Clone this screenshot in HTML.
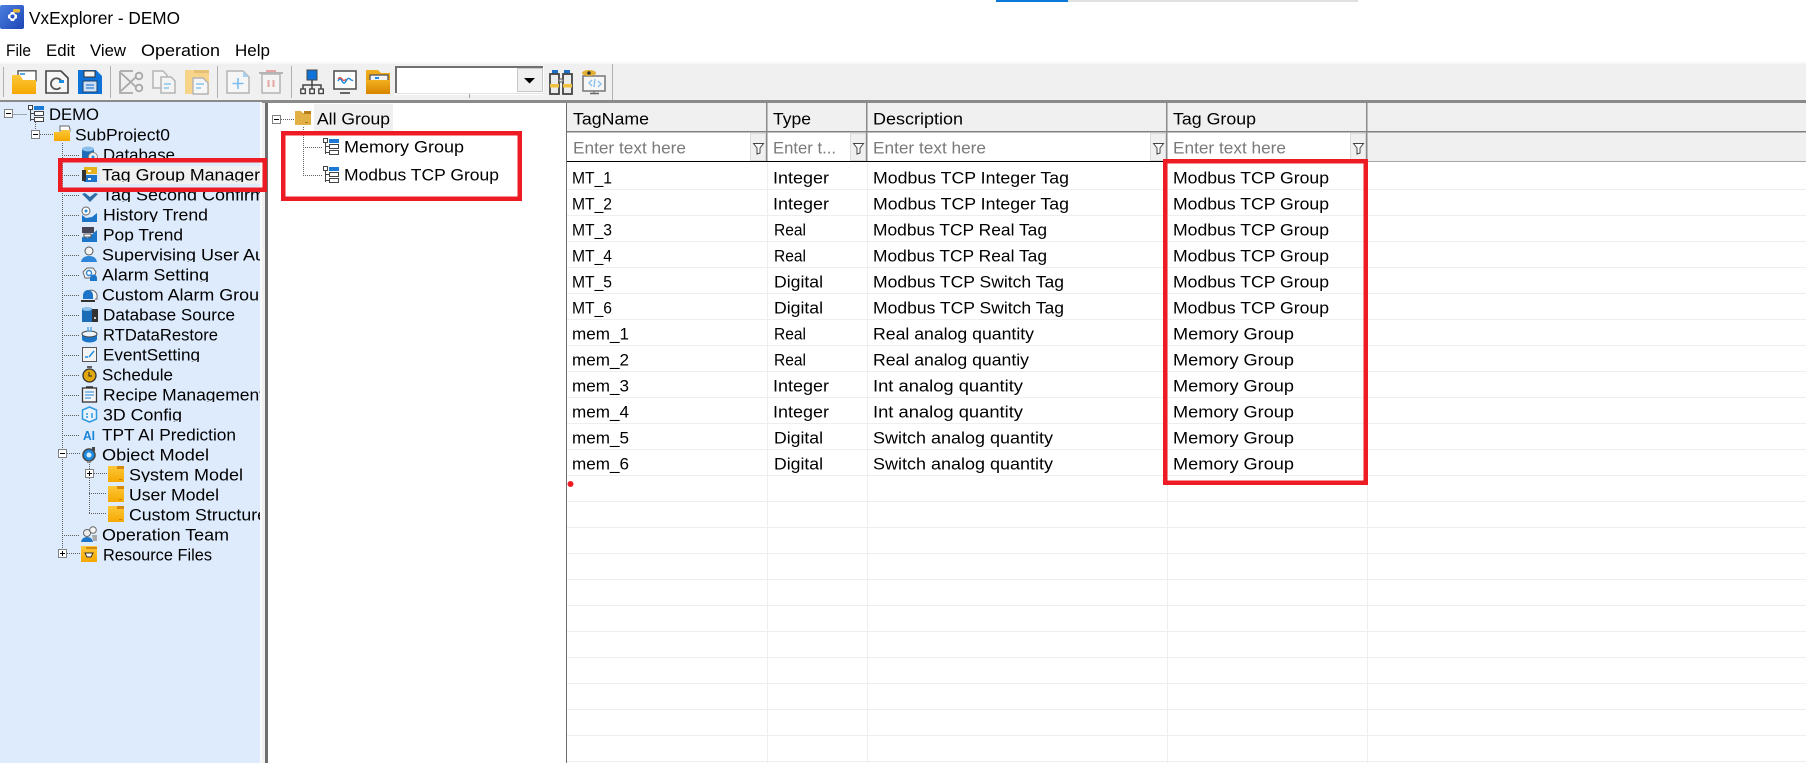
<!DOCTYPE html>
<html><head><meta charset="utf-8"><title>VxExplorer - DEMO</title>
<style>
html,body{margin:0;padding:0;background:#fff;width:1806px;height:763px;overflow:hidden}
svg{display:block}
text{font-family:"Liberation Sans",sans-serif;font-size:17px;fill:#000}
.f{fill:#7a7a7a}
</style></head><body>
<svg xmlns="http://www.w3.org/2000/svg" width="1806" height="763" viewBox="0 0 1806 763">
<defs>
<linearGradient id="yg" x1="0" y1="0" x2="0" y2="1"><stop offset="0" stop-color="#fdc83a"/><stop offset="1" stop-color="#f5a800"/></linearGradient>
<linearGradient id="og" x1="0" y1="0" x2="0" y2="1"><stop offset="0" stop-color="#f2b01e"/><stop offset="1" stop-color="#d88400"/></linearGradient>
<linearGradient id="bl" x1="0" y1="0" x2="1" y2="1"><stop offset="0" stop-color="#4a7fe0"/><stop offset="1" stop-color="#1f45b5"/></linearGradient>
<clipPath id="rows"><rect x="0" y="104" width="260" height="18"/><rect x="0" y="125" width="260" height="17"/><rect x="0" y="145" width="260" height="17"/><rect x="0" y="165" width="260" height="17"/><rect x="0" y="185" width="260" height="17"/><rect x="0" y="205" width="260" height="17"/><rect x="0" y="225" width="260" height="17"/><rect x="0" y="245" width="260" height="17"/><rect x="0" y="265" width="260" height="17"/><rect x="0" y="285" width="260" height="17"/><rect x="0" y="305" width="260" height="17"/><rect x="0" y="325" width="260" height="17"/><rect x="0" y="345" width="260" height="17"/><rect x="0" y="365" width="260" height="17"/><rect x="0" y="385" width="260" height="17"/><rect x="0" y="405" width="260" height="17"/><rect x="0" y="425" width="260" height="17"/><rect x="0" y="445" width="260" height="17"/><rect x="0" y="465" width="260" height="17"/><rect x="0" y="485" width="260" height="17"/><rect x="0" y="505" width="260" height="17"/><rect x="0" y="525" width="260" height="17"/><rect x="0" y="545" width="260" height="17"/></clipPath>
<g id="minus"><rect x="0.5" y="0.5" width="8" height="8" fill="#fff" stroke="#808080"/><path d="M2 4.5h5" stroke="#000"/></g>
<g id="plus"><rect x="0.5" y="0.5" width="8" height="8" fill="#fff" stroke="#808080"/><path d="M2 4.5h5M4.5 2v5" stroke="#000"/></g>
<g id="tree"><rect x="1.5" y="0.5" width="4" height="4" fill="#fff" stroke="#444"/><rect x="7" y="1" width="10" height="4" fill="#1a7ad4"/><path d="M3.5 5v11M3.5 8.5H7M3.5 14.500H7" stroke="#444" fill="none"/><rect x="7.500" y="6.500" width="9" height="4" fill="#fff" stroke="#444"/><rect x="7.500" y="12.500" width="9" height="4" fill="#fff" stroke="#444"/></g>
<g id="fold"><path d="M0 0h11l1 2h4v14H0z" fill="url(#yg)"/><path d="M9 0h7v3H9z" fill="#d68a10"/><path d="M11 13h3v1h-3z" fill="#c98200"/></g>
<filter id="soft" x="-5%" y="-5%" width="110%" height="110%"><feGaussianBlur stdDeviation="0.3"/></filter>
</defs>

<!-- loading bar -->
<rect x="996" y="0" width="72" height="2" fill="#0a78d7"/>
<rect x="1068" y="0" width="290" height="2" fill="#e1e1e1"/>

<!-- title -->
<rect x="0" y="5" width="24" height="24" rx="2" fill="url(#bl)"/>
<path d="M8 15l2-1 1-2h3l1 2 2 1v3l-2 1-1 2h-3l-1-2-2-1z" fill="#fff"/>
<circle cx="12.500" cy="16.500" r="2" fill="#2a55c4"/>
<rect x="13" y="9" width="7" height="3.500" rx="1" fill="#e8b93a"/>
<text x="29" y="24" textLength="151" lengthAdjust="spacingAndGlyphs" style="font-size:17.500px">VxExplorer - DEMO</text>
<text x="6" y="56" textLength="25" lengthAdjust="spacingAndGlyphs">File</text>
<text x="46" y="56" textLength="29" lengthAdjust="spacingAndGlyphs">Edit</text>
<text x="90" y="56" textLength="36" lengthAdjust="spacingAndGlyphs">View</text>
<text x="141" y="56" textLength="79" lengthAdjust="spacingAndGlyphs">Operation</text>
<text x="235" y="56" textLength="35" lengthAdjust="spacingAndGlyphs">Help</text>

<!-- toolbar -->
<rect x="0" y="62" width="1806" height="2" fill="#f7f7f7"/>
<rect x="0" y="64" width="1806" height="37" fill="#f0f0f0"/>
<rect x="0" y="100" width="1806" height="2" fill="#8a8a8a"/>
<path d="M3.500 67v30M110.500 66v32M217.500 66v32M291.500 66v32M612.500 64v36" stroke="#b0b0b0" fill="none"/>

<g filter="url(#soft)">
<!-- open -->
<g transform="translate(12,70)"><path d="M6 0.800h18v10H6z" fill="#fff" stroke="#555" stroke-width="1.400"/><rect x="8" y="3" width="5" height="2" fill="#5aa9e6"/><path d="M0 5h8l3 5h13v14H0z" fill="url(#yg)"/></g>
<!-- refresh doc -->
<g transform="translate(45,70)"><path d="M1 1h15l7 7v15H1z" fill="#f6f6f6" stroke="#444" stroke-width="1.600"/><path d="M16.500 11.500a5.500 5.500 0 1 0-1 6" fill="none" stroke="#555" stroke-width="1.800"/><path d="M14 10h5v3h-5z" fill="#1f8de0"/></g>
<!-- save -->
<g transform="translate(78,70)"><path d="M0 0h18l6 6v18H0z" fill="#0b73d8"/><rect x="6" y="1" width="11" height="6" fill="#f4f4f4" stroke="#333"/><rect x="5" y="11" width="14" height="11" fill="#cfe0f4" stroke="#1a3f6d"/><path d="M8 15h8M8 18h8" stroke="#4a90d8" stroke-width="1.400"/></g>
<!-- cut -->
<g transform="translate(119,70)" fill="none" stroke="#a8a8a8" stroke-width="1.800"><path d="M1 1h13M1 1v22h13"/><circle cx="20" cy="6" r="3.300"/><circle cx="20" cy="18" r="3.300"/><path d="M2 3l15 14M2 21l15-14"/></g>
<!-- copy -->
<g transform="translate(152,70)"><path d="M1 1h10l4 4v13H1z" fill="#f4f4f4" stroke="#b4b4b4" stroke-width="1.500"/><path d="M9 7h10l4 4v12H9z" fill="#f4f4f4" stroke="#b4b4b4" stroke-width="1.500"/><path d="M12 14h7M12 18h5" stroke="#8cc4ee" stroke-width="1.600"/></g>
<!-- paste -->
<g transform="translate(185,70)"><path d="M0 0h24v24H0z" fill="#f6d48a"/><path d="M9 0h15v3H9z" fill="#e6c074"/><path d="M8 8h10l5 5v11H8z" fill="#f6f6f6" stroke="#b4b4b4" stroke-width="1.400"/><path d="M11 14h8M11 18h5" stroke="#8cc4ee" stroke-width="1.600"/></g>
<!-- new -->
<g transform="translate(226,70)"><path d="M1 1h16l6 6v16H1z" fill="#f6f6f6" stroke="#b4b4b4" stroke-width="1.500"/><path d="M17 1l6 6h-6z" fill="#a8d0f0"/><path d="M12 8v11M6.500 13.500h11" stroke="#7cbcec" stroke-width="1.600"/></g>
<!-- delete -->
<g transform="translate(259,70)"><path d="M0 3h24" stroke="#b4b4b4" stroke-width="2"/><path d="M7 0h10v2H7z" fill="#e6a5a5"/><path d="M3 4h18v19H3z" fill="#f4f4f4" stroke="#b4b4b4" stroke-width="1.500"/><path d="M9.500 10v7M14.500 10v7" stroke="#e6a5a5" stroke-width="2"/></g>
<!-- network -->
<g transform="translate(300,70)"><rect x="7" y="0" width="10" height="10" fill="#0b73d8" stroke="#444"/><path d="M12 10v4M3 19v-4h18v4M12 14v5" fill="none" stroke="#444" stroke-width="1.500"/><rect x="0.800" y="19" width="4.500" height="4.500" fill="#fff" stroke="#444" stroke-width="1.400"/><rect x="9.800" y="19" width="4.500" height="4.500" fill="#fff" stroke="#444" stroke-width="1.400"/><rect x="18.800" y="19" width="4.500" height="4.500" fill="#fff" stroke="#444" stroke-width="1.400"/></g>
<!-- monitor -->
<g transform="translate(333,70)"><rect x="1" y="1" width="22" height="18" fill="#fff" stroke="#555" stroke-width="1.600"/><path d="M5 11q2-4 4 0t4 0 4-2 3 1" fill="none" stroke="#1f8de0" stroke-width="1.500"/><path d="M5 9q2-3 4 0t4 0" fill="none" stroke="#e84a3a" stroke-width="1.200"/><path d="M7 23h10" stroke="#666" stroke-width="2"/></g>
<!-- orange folder -->
<g transform="translate(366,70)"><path d="M0 0h12l3 3h9v21H0z" fill="url(#og)"/><rect x="4" y="5" width="18" height="11" fill="#f4f4f4" stroke="#555" stroke-width="1.300"/><rect x="9" y="7" width="4" height="2" fill="#1f8de0"/><path d="M0 10h24l-1 14H0z" fill="url(#og)"/></g>
</g>

<!-- combobox -->
<rect x="395" y="66" width="149" height="29" fill="#fff"/>
<path d="M396 93V67h147" fill="none" stroke="#707070" stroke-width="2"/>
<path d="M396 93.500h148" stroke="#e3e3e3"/>
<rect x="517.500" y="68.500" width="25" height="23" fill="#f0f0f0" stroke="#c8c8c8"/>
<path d="M524 78h11l-5.500 5.500z" fill="#000"/>
<rect x="469" y="94" width="1" height="4" fill="#a0a0a0"/>

<g filter="url(#soft)">
<!-- binoculars -->
<g transform="translate(549,70)"><rect x="3" y="0" width="6" height="4" fill="#1a6fc4"/><rect x="15" y="0" width="6" height="4" fill="#1a6fc4"/><rect x="1" y="4" width="9" height="20" fill="#ececec" stroke="#444" stroke-width="1.800"/><rect x="14" y="4" width="9" height="20" fill="#ececec" stroke="#444" stroke-width="1.800"/><rect x="1" y="14" width="9" height="3.500" fill="#f0c040"/><rect x="14" y="14" width="9" height="3.500" fill="#f0c040"/><rect x="10" y="9" width="4" height="3" fill="#ddd" stroke="#555"/></g>
<!-- eye screen -->
<g transform="translate(582,70)"><rect x="1" y="6" width="22" height="15" fill="#f6f6f6" stroke="#777" stroke-width="1.500"/><ellipse cx="7" cy="3" rx="7" ry="3" fill="#e2b030"/><circle cx="7" cy="3" r="1.800" fill="#333"/><path d="M10 10l-3 3 3 3M13 9l-1 8M16 11l3 3-3 3" fill="none" stroke="#8cc0ee" stroke-width="1.400"/><path d="M8 23.500h9" stroke="#666" stroke-width="1.500"/><path d="M12 21v2" stroke="#666"/></g>
</g>

<!-- panels -->
<rect x="0" y="102" width="260" height="661" fill="#deebfc"/>
<rect x="260" y="102" width="2" height="661" fill="#fafafa"/>
<rect x="262" y="102" width="3" height="661" fill="#f0f0f0"/>
<rect x="265" y="102" width="3" height="661" fill="#6e6e6e"/>
<rect x="268" y="103" width="298" height="660" fill="#fff"/>
<rect x="566" y="102" width="1" height="661" fill="#6e6e6e"/>
<rect x="262" y="102" width="1544" height="1" fill="#8a8a8a"/>

<!-- tree lines -->
<g fill="none" stroke="#606060" stroke-dasharray="1 1">
<path d="M13.500 114.500H27M35.500 122V130M40 134.500H54M62.500 143V549"/>
<path d="M62 155.500H80M62 175.500H80M62 195.500H80M62 215.500H80M62 235.500H80M62 255.500H80M62 275.500H80M62 295.500H80M62 315.500H80M62 335.500H80M62 355.500H80M62 375.500H80M62 395.500H80M62 415.500H80M62 435.500H80M67 453.500H80M62 535.500H80M67 553.500H80"/>
<path d="M89.500 462V513.500M94 473.500H107M89 493.500H107M89 513.500H107"/>
<path d="M281 119.500H295M303.500 127V175.500M303 147.500H322M303 175.500H322"/>
</g>
<use href="#minus" x="4" y="109"/><use href="#minus" x="31" y="130"/>
<use href="#minus" x="58" y="449"/><use href="#plus" x="85" y="469"/><use href="#plus" x="58" y="549"/>
<use href="#tree" x="27" y="105"/>

<!-- SubProject folder -->
<path d="M60 126h9l1 3v2H60z" fill="#fff" stroke="#666"/>
<path d="M54 132h6l2-2h8v11H54z" fill="url(#yg)"/>

<!-- tree icons -->
<rect x="100" y="166" width="160" height="18" fill="#f0f0f0"/>
<g filter="url(#soft)">
<!-- database -->
<g transform="translate(81,146)"><rect x="1" y="2" width="12" height="14" rx="2" fill="#1a6cb8"/><ellipse cx="7" cy="3" rx="6" ry="2.500" fill="#8cc0e8"/><circle cx="12" cy="11" r="4.500" fill="#f0f0f0" stroke="#888"/><circle cx="12" cy="11" r="1.500" fill="#1f8de0"/></g>
<!-- tag group -->
<g transform="translate(81,166)"><path d="M3 1h13v7H3z" fill="#e6b21e"/><path d="M3 9h13v7H3z" fill="#1a74c8"/><path d="M1 4h4v11H1z" fill="#333"/><rect x="7" y="4" width="3" height="2" fill="#fff"/><rect x="7" y="12" width="3" height="2" fill="#fff"/></g>
<!-- second confirm -->
<g transform="translate(81,186)"><path d="M1 8l8 8 8-8-3-1-5 4-5-4z" fill="#2d6da8"/></g>
<!-- history -->
<g transform="translate(81,206)"><circle cx="5" cy="5" r="4" fill="#fff" stroke="#666"/><circle cx="5" cy="5" r="1.500" fill="#1f8de0"/><path d="M1 16V9l4 3 6-1 5-4v9z" fill="#1a74c8"/></g>
<!-- pop -->
<g transform="translate(81,226)"><rect x="1" y="1" width="12" height="6" fill="#445" /><path d="M1 16v-5l6 1 9-8v12z" fill="#1a74c8"/><rect x="3" y="8" width="7" height="3" fill="#fff" stroke="#555"/></g>
<!-- user -->
<g transform="translate(81,246)"><circle cx="8" cy="5" r="4" fill="#f4f4f4" stroke="#555"/><path d="M0 16q1-6 8-6t8 6z" fill="#2d86d8"/></g>
<!-- alarm -->
<g transform="translate(81,266)"><path d="M2 6l4-4h6l3 4-2 6H4z" fill="#f4f4f4" stroke="#666"/><circle cx="8" cy="7" r="2.500" fill="#fff" stroke="#2d86d8" stroke-width="1.400"/><path d="M9 15v-3a3.500 3.500 0 0 1 7 0v3z" fill="#1a74c8"/></g>
<!-- custom alarm -->
<g transform="translate(81,286)"><path d="M7 5a6 6 0 0 1 9 4v4h-2" fill="#f4f4f4" stroke="#666"/><path d="M2 13V9a5 5 0 0 1 10 0v4z" fill="#1a74c8"/><path d="M0 14h14v2H0z" fill="#333"/></g>
<!-- db source -->
<g transform="translate(81,306)"><rect x="1" y="2" width="10" height="14" fill="#1a6cb8"/><ellipse cx="6" cy="3" rx="5" ry="2" fill="#8cc0e8"/><rect x="11" y="3" width="6" height="13" fill="#333"/><circle cx="14" cy="12" r="1" fill="#fff"/></g>
<!-- restore -->
<g transform="translate(81,326)"><path d="M1 8v5a7.500 3.500 0 0 0 15 0V8z" fill="#1a74c8"/><ellipse cx="8.500" cy="8" rx="7.500" ry="3" fill="#eef4fb" stroke="#444"/><path d="M7 1v5M10 1v5" stroke="#5aa9e6" stroke-width="1.500"/></g>
<!-- event -->
<g transform="translate(81,346)"><rect x="1.500" y="1.500" width="14" height="14" fill="#f4f4f4" stroke="#555"/><path d="M4 11h3M8 11l5-6" stroke="#1f8de0" stroke-width="1.500"/></g>
<!-- schedule -->
<g transform="translate(81,366)"><circle cx="8.500" cy="9.500" r="6.500" fill="#e0a80c" stroke="#333" stroke-width="1.300"/><path d="M6 1h5" stroke="#333" stroke-width="1.500"/><path d="M8 6v4h3" fill="none" stroke="#222"/></g>
<!-- recipe -->
<g transform="translate(81,386)"><rect x="1.500" y="2" width="14" height="14" fill="#f4f4f4" stroke="#333" stroke-width="1.300"/><path d="M5 1h7" stroke="#333" stroke-width="1.500"/><path d="M4 6h9M4 9h9M4 12h6" stroke="#4a9ae0" stroke-width="1.300"/></g>
<!-- 3d -->
<g transform="translate(81,406)"><path d="M8.500 1l7 3v9l-7 3-7-3V4z" fill="#eaf4fe" stroke="#2d9ae0" stroke-width="1.500"/><path d="M5 8h2M5 11h2M11 7v5" stroke="#2d9ae0" stroke-width="1.500"/></g>
<!-- ob -->
<g transform="translate(81,446)"><circle cx="8" cy="9" r="6" fill="#1a8be0" stroke="#444" stroke-width="1.500"/><circle cx="8" cy="9" r="2.500" fill="#d8ecfb"/><path d="M11 1h3v4h-3z" fill="#444"/><path d="M6 15h4v2H6z" fill="#888"/></g>
<!-- operation team -->
<g transform="translate(81,526)"><circle cx="6" cy="7" r="3.500" fill="#eee" stroke="#666"/><circle cx="12" cy="4" r="3.300" fill="#f4f4f4" stroke="#666"/><path d="M0 16q1-5 6-5t6 5z" fill="#1a74c8"/><path d="M11 9h5v6h-4z" fill="#aaa"/></g>
<!-- resource -->
<g transform="translate(81,546)"><rect x="0" y="0" width="16" height="16" fill="url(#yg)"/><rect x="5" y="1" width="11" height="2" fill="#d68a10"/><path d="M4 7h8l-2 4H6z" fill="#fff" stroke="#333"/></g>
</g>
<text x="83" y="440" style="font-size:12.500px;font-weight:bold;fill:#1a84d8" textLength="12" lengthAdjust="spacingAndGlyphs">AI</text>
<use href="#fold" x="108" y="466"/><use href="#fold" x="108" y="486"/><use href="#fold" x="108" y="506"/>

<!-- left tree labels -->
<g clip-path="url(#rows)">
<text x="49" y="120" textLength="50" lengthAdjust="spacingAndGlyphs">DEMO</text>
<text x="75" y="140.500" textLength="95" lengthAdjust="spacingAndGlyphs">SubProject0</text>
<text x="103" y="160.500" textLength="72" lengthAdjust="spacingAndGlyphs">Database</text>
<text x="102" y="180.500" textLength="158" lengthAdjust="spacingAndGlyphs">Tag Group Manager</text>
<text x="102" y="200.500" textLength="163" lengthAdjust="spacingAndGlyphs">Tag Second Confirm</text>
<text x="103" y="220.500" textLength="105" lengthAdjust="spacingAndGlyphs">History Trend</text>
<text x="103" y="240.500" textLength="80" lengthAdjust="spacingAndGlyphs">Pop Trend</text>
<text x="102" y="260.500" textLength="212" lengthAdjust="spacingAndGlyphs">Supervising User Authority</text>
<text x="102" y="280.500" textLength="107" lengthAdjust="spacingAndGlyphs">Alarm Setting</text>
<text x="102" y="300.500" textLength="167" lengthAdjust="spacingAndGlyphs">Custom Alarm Group</text>
<text x="103" y="320.500" textLength="132" lengthAdjust="spacingAndGlyphs">Database Source</text>
<text x="103" y="340.500" textLength="115" lengthAdjust="spacingAndGlyphs">RTDataRestore</text>
<text x="103" y="360.500" textLength="97" lengthAdjust="spacingAndGlyphs">EventSetting</text>
<text x="102" y="380.500" textLength="71" lengthAdjust="spacingAndGlyphs">Schedule</text>
<text x="103" y="400.500" textLength="161" lengthAdjust="spacingAndGlyphs">Recipe Management</text>
<text x="103" y="420.500" textLength="79" lengthAdjust="spacingAndGlyphs">3D Config</text>
<text x="102" y="440.500" textLength="134" lengthAdjust="spacingAndGlyphs">TPT AI Prediction</text>
<text x="102" y="460.500" textLength="107" lengthAdjust="spacingAndGlyphs">Object Model</text>
<text x="129" y="480.500" textLength="114" lengthAdjust="spacingAndGlyphs">System Model</text>
<text x="129" y="500.500" textLength="90" lengthAdjust="spacingAndGlyphs">User Model</text>
<text x="129" y="520.500" textLength="138" lengthAdjust="spacingAndGlyphs">Custom Structure</text>
<text x="102" y="540.500" textLength="127" lengthAdjust="spacingAndGlyphs">Operation Team</text>
<text x="103" y="560.500" textLength="109" lengthAdjust="spacingAndGlyphs">Resource Files</text>
</g>

<!-- middle tree -->
<rect x="314" y="104" width="79" height="28" fill="#f0f0f0"/>
<use href="#minus" x="272" y="115"/>
<path d="M295 111h6l2 2h8v12h-16z" fill="#e3b045"/><path d="M304 111h7v3h-7z" fill="#b8801c"/><path d="M305 122h3v1h-3z" fill="#a87a18"/>
<text x="317" y="124.500" textLength="73" lengthAdjust="spacingAndGlyphs">All Group</text>
<use href="#tree" x="322" y="138"/><use href="#tree" x="322" y="166"/>
<text x="344" y="152.500" textLength="120" lengthAdjust="spacingAndGlyphs">Memory Group</text>
<text x="344" y="180.500" textLength="155" lengthAdjust="spacingAndGlyphs">Modbus TCP Group</text>

<!-- grid header -->
<rect x="567" y="103" width="1239" height="28" fill="#f0f0f0"/>
<rect x="1367" y="132" width="439" height="29" fill="#f0f0f0"/>
<rect x="567" y="131" width="1239" height="1.500" fill="#808080"/>
<rect x="567" y="161" width="800" height="1" fill="#000"/>
<rect x="1367" y="161" width="439" height="1" fill="#a8a8a8"/>
<g fill="#8a8a8a"><rect x="766" y="103" width="1.500" height="58"/><rect x="866" y="103" width="1.500" height="58"/><rect x="1166" y="103" width="1.500" height="58"/><rect x="1366" y="103" width="1.500" height="58"/></g>
<g fill="#f0f0f0" stroke="#dcdcdc"><rect x="750.500" y="133.500" width="15" height="27"/><rect x="850.500" y="133.500" width="15" height="27"/><rect x="1150.500" y="133.500" width="15" height="27"/><rect x="1350.500" y="133.500" width="15" height="27"/></g>
<g fill="#fff" stroke="#444"><path d="M753.500 143.500h10l-3.500 4.500v5l-3 1v-6z"/><path d="M853.500 143.500h10l-3.500 4.500v5l-3 1v-6z"/><path d="M1153.500 143.500h10l-3.500 4.500v5l-3 1v-6z"/><path d="M1353.500 143.500h10l-3.500 4.500v5l-3 1v-6z"/></g>
<text x="573" y="124.500" textLength="76" lengthAdjust="spacingAndGlyphs">TagName</text>
<text x="773" y="124.500" textLength="38" lengthAdjust="spacingAndGlyphs">Type</text>
<text x="873" y="124.500" textLength="90" lengthAdjust="spacingAndGlyphs">Description</text>
<text x="1173" y="124.500" textLength="83" lengthAdjust="spacingAndGlyphs">Tag Group</text>
<text class="f" x="573" y="153.500" textLength="113" lengthAdjust="spacingAndGlyphs">Enter text here</text>
<text class="f" x="773" y="153.500" textLength="63" lengthAdjust="spacingAndGlyphs">Enter t...</text>
<text class="f" x="873" y="153.500" textLength="113" lengthAdjust="spacingAndGlyphs">Enter text here</text>
<text class="f" x="1173" y="153.500" textLength="113" lengthAdjust="spacingAndGlyphs">Enter text here</text>

<!-- grid lines -->
<path d="M567 189.500H1806M567 215.500H1806M567 241.500H1806M567 267.500H1806M567 293.500H1806M567 319.500H1806M567 345.500H1806M567 371.500H1806M567 397.500H1806M567 423.500H1806M567 449.500H1806M567 475.500H1806M567 501.500H1806M567 527.500H1806M567 553.500H1806M567 579.500H1806M567 605.500H1806M567 631.500H1806M567 657.500H1806M567 683.500H1806M567 709.500H1806M567 735.500H1806M567 761.500H1806M767.500 162V763M867.500 162V763M1167.500 162V763M1367.500 162V763" stroke="#eeeeee" fill="none"/>

<!-- rows -->
<g>
<text x="572" y="183.500" textLength="40" lengthAdjust="spacingAndGlyphs">MT_1</text><text x="773" y="183.500" textLength="56" lengthAdjust="spacingAndGlyphs">Integer</text><text x="873" y="183.500" textLength="196" lengthAdjust="spacingAndGlyphs">Modbus TCP Integer Tag</text><text x="1173" y="183.500" textLength="156" lengthAdjust="spacingAndGlyphs">Modbus TCP Group</text>
<text x="572" y="209.500" textLength="40" lengthAdjust="spacingAndGlyphs">MT_2</text><text x="773" y="209.500" textLength="56" lengthAdjust="spacingAndGlyphs">Integer</text><text x="873" y="209.500" textLength="196" lengthAdjust="spacingAndGlyphs">Modbus TCP Integer Tag</text><text x="1173" y="209.500" textLength="156" lengthAdjust="spacingAndGlyphs">Modbus TCP Group</text>
<text x="572" y="235.500" textLength="40" lengthAdjust="spacingAndGlyphs">MT_3</text><text x="774" y="235.500" textLength="32" lengthAdjust="spacingAndGlyphs">Real</text><text x="873" y="235.500" textLength="174" lengthAdjust="spacingAndGlyphs">Modbus TCP Real Tag</text><text x="1173" y="235.500" textLength="156" lengthAdjust="spacingAndGlyphs">Modbus TCP Group</text>
<text x="572" y="261.500" textLength="40" lengthAdjust="spacingAndGlyphs">MT_4</text><text x="774" y="261.500" textLength="32" lengthAdjust="spacingAndGlyphs">Real</text><text x="873" y="261.500" textLength="174" lengthAdjust="spacingAndGlyphs">Modbus TCP Real Tag</text><text x="1173" y="261.500" textLength="156" lengthAdjust="spacingAndGlyphs">Modbus TCP Group</text>
<text x="572" y="287.500" textLength="40" lengthAdjust="spacingAndGlyphs">MT_5</text><text x="774" y="287.500" textLength="49" lengthAdjust="spacingAndGlyphs">Digital</text><text x="873" y="287.500" textLength="191" lengthAdjust="spacingAndGlyphs">Modbus TCP Switch Tag</text><text x="1173" y="287.500" textLength="156" lengthAdjust="spacingAndGlyphs">Modbus TCP Group</text>
<text x="572" y="313.500" textLength="40" lengthAdjust="spacingAndGlyphs">MT_6</text><text x="774" y="313.500" textLength="49" lengthAdjust="spacingAndGlyphs">Digital</text><text x="873" y="313.500" textLength="191" lengthAdjust="spacingAndGlyphs">Modbus TCP Switch Tag</text><text x="1173" y="313.500" textLength="156" lengthAdjust="spacingAndGlyphs">Modbus TCP Group</text>
<text x="572" y="339.500" textLength="57" lengthAdjust="spacingAndGlyphs">mem_1</text><text x="774" y="339.500" textLength="32" lengthAdjust="spacingAndGlyphs">Real</text><text x="873" y="339.500" textLength="161" lengthAdjust="spacingAndGlyphs">Real analog quantity</text><text x="1173" y="339.500" textLength="121" lengthAdjust="spacingAndGlyphs">Memory Group</text>
<text x="572" y="365.500" textLength="57" lengthAdjust="spacingAndGlyphs">mem_2</text><text x="774" y="365.500" textLength="32" lengthAdjust="spacingAndGlyphs">Real</text><text x="873" y="365.500" textLength="156" lengthAdjust="spacingAndGlyphs">Real analog quantiy</text><text x="1173" y="365.500" textLength="121" lengthAdjust="spacingAndGlyphs">Memory Group</text>
<text x="572" y="391.500" textLength="57" lengthAdjust="spacingAndGlyphs">mem_3</text><text x="773" y="391.500" textLength="56" lengthAdjust="spacingAndGlyphs">Integer</text><text x="873" y="391.500" textLength="150" lengthAdjust="spacingAndGlyphs">Int analog quantity</text><text x="1173" y="391.500" textLength="121" lengthAdjust="spacingAndGlyphs">Memory Group</text>
<text x="572" y="417.500" textLength="57" lengthAdjust="spacingAndGlyphs">mem_4</text><text x="773" y="417.500" textLength="56" lengthAdjust="spacingAndGlyphs">Integer</text><text x="873" y="417.500" textLength="150" lengthAdjust="spacingAndGlyphs">Int analog quantity</text><text x="1173" y="417.500" textLength="121" lengthAdjust="spacingAndGlyphs">Memory Group</text>
<text x="572" y="443.500" textLength="57" lengthAdjust="spacingAndGlyphs">mem_5</text><text x="774" y="443.500" textLength="49" lengthAdjust="spacingAndGlyphs">Digital</text><text x="873" y="443.500" textLength="180" lengthAdjust="spacingAndGlyphs">Switch analog quantity</text><text x="1173" y="443.500" textLength="121" lengthAdjust="spacingAndGlyphs">Memory Group</text>
<text x="572" y="469.500" textLength="57" lengthAdjust="spacingAndGlyphs">mem_6</text><text x="774" y="469.500" textLength="49" lengthAdjust="spacingAndGlyphs">Digital</text><text x="873" y="469.500" textLength="180" lengthAdjust="spacingAndGlyphs">Switch analog quantity</text><text x="1173" y="469.500" textLength="121" lengthAdjust="spacingAndGlyphs">Memory Group</text>
</g>
<circle cx="570.500" cy="484" r="3" fill="#ed1c24"/>

<!-- red highlight boxes -->
<g fill="none" stroke="#ed1c24" stroke-width="4.500">
<rect x="60.250" y="160.250" width="204.500" height="29.500"/>
<rect x="283.250" y="133.250" width="236.500" height="65.500"/>
<rect x="1165.250" y="161.250" width="200.500" height="321.500"/>
</g>
</svg>
</body></html>
